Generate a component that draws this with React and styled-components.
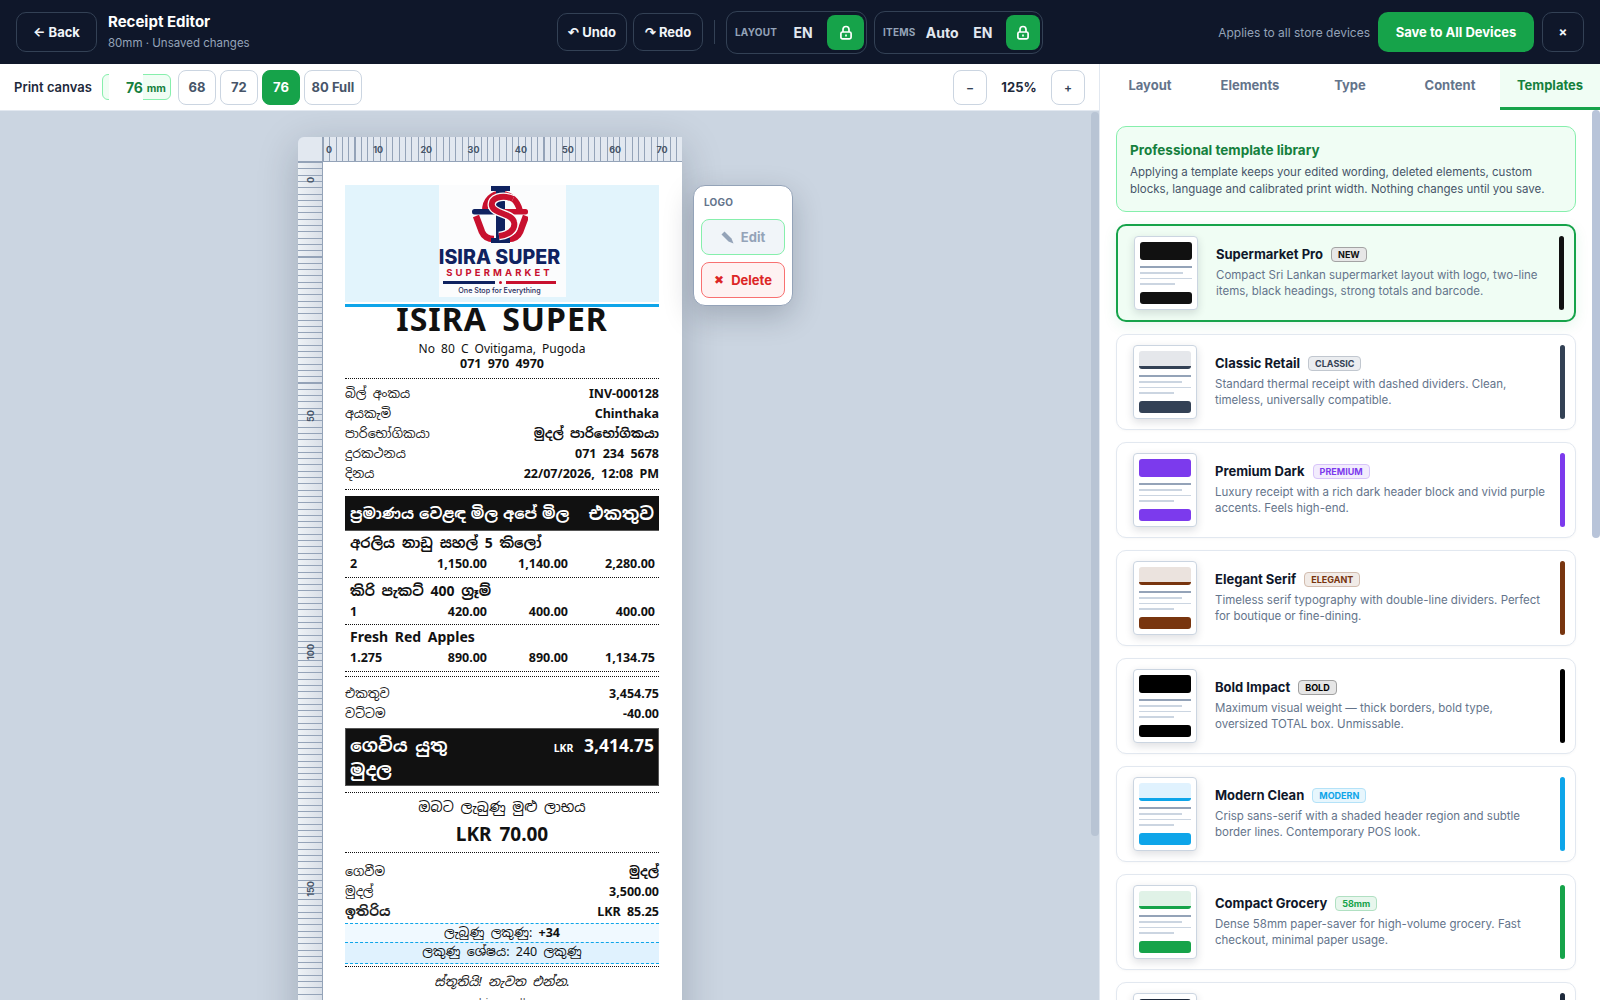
import React from "react";
import styled, { createGlobalStyle } from "styled-components";

const Global = createGlobalStyle`
  html, body { margin: 0; padding: 0; height: 100%; overflow: hidden; }
  body { font-family: Inter, "Noto Sans", sans-serif; background: #fff; }
  * { box-sizing: border-box; }
  #root { height: 100%; }
`;

const Page = styled.div`
  width: 1600px;
  height: 1000px;
  display: flex;
  flex-direction: column;
  overflow: hidden;
`;

/* header */
const Header = styled.header`
  height: 64px;
  flex: none;
  background: #0f172a;
  display: flex;
  align-items: center;
  padding: 0 16px;
`;
const HeadLeft = styled.div`
  display: flex;
  align-items: center;
  gap: 11px;
  width: 541px;
`;
const HeadCenter = styled.div`
  display: flex;
  align-items: center;
  gap: 6px;
`;
const HeadRight = styled.div`
  margin-left: auto;
  display: flex;
  align-items: center;
  gap: 8px;
`;
const DarkButton = styled.button`
  height: ${(p) => p.$h || 38}px;
  width: ${(p) => p.$w}px;
  padding: 0;
  background: transparent;
  border: 1px solid #334155;
  border-radius: 10px;
  color: #f1f5f9;
  font: 700 13px Inter, sans-serif;
  display: flex;
  align-items: center;
  justify-content: center;
  gap: 3px;
`;
const TitleBlock = styled.div`
  display: flex;
  flex-direction: column;
  gap: 5px;
`;
const AppTitle = styled.div`
  color: #fff;
  font-size: 15px;
  font-weight: 700;
  line-height: 18px;
`;
const AppSub = styled.div`
  color: #94a3b8;
  font-size: 11.5px;
  line-height: 15px;
`;
const VDivider = styled.div`
  width: 1px;
  height: 24px;
  background: #334155;
  margin: 0 5px;
`;
const LangGroup = styled.div`
  height: 43px;
  width: ${(p) => p.$w}px;
  border: 1px solid #334155;
  border-radius: 11px;
  display: flex;
  align-items: center;
  padding: 0 2px 0 8px;
  margin-right: 1px;
`;
const GroupLabel = styled.span`
  color: #94a3b8;
  font-size: 10px;
  font-weight: 700;
  letter-spacing: 0.2px;
  width: ${(p) => p.$w}px;
`;
const GroupValue = styled.span`
  color: #e2e8f0;
  font-size: 14px;
  font-weight: 700;
  width: ${(p) => p.$w}px;
  text-align: center;
`;
const LockBox = styled.div`
  margin-left: auto;
  width: 37px;
  height: 35px;
  border-radius: 8px;
  background: #16a34a;
  color: #fff;
  display: flex;
  align-items: center;
  justify-content: center;
`;
const Hint = styled.span`
  color: #94a3b8;
  font-size: 12px;
`;
const SaveButton = styled.button`
  height: 40px;
  width: 156px;
  border: 0;
  border-radius: 10px;
  background: #16a34a;
  color: #fff;
  font: 700 13px Inter, sans-serif;
`;

/* body */
const Body = styled.div`
  flex: 1;
  display: flex;
  min-height: 0;
`;
const Left = styled.div`
  width: 1100px;
  display: flex;
  flex-direction: column;
  border-right: 1px solid #e2e8f0;
`;
const Toolbar = styled.div`
  height: 47px;
  flex: none;
  background: #fff;
  border-bottom: 1px solid #e2e8f0;
  display: flex;
  align-items: center;
  padding: 0 14px;
`;
const CanvasLabel = styled.span`
  font-size: 13px;
  font-weight: 600;
  color: #1e293b;
  margin-right: 10px;
`;
const WidthField = styled.div`
  position: relative;
  width: 69px;
  height: 26px;
  border: 1px solid #86efac;
  border-radius: 6px;
  background: #f0fdf4;
  display: flex;
  align-items: center;
  justify-content: flex-end;
  padding: 2px 4px 0 0;
  margin-right: 7px;
  color: #15803d;
  font-size: 10.5px;
  font-weight: 700;
`;
const WidthInput = styled.div`
  position: absolute;
  left: 6px;
  top: -1px;
  width: 34px;
  height: 33px;
  background: #fff;
  border-radius: 0 0 6px 6px;
  color: #15803d;
  font-size: 14px;
  font-weight: 700;
  text-align: right;
  line-height: 28px;
`;
const Preset = styled.button`
  width: ${(p) => p.$w || 38}px;
  height: 35px;
  margin-right: 4px;
  padding: 0;
  border-radius: 8px;
  border: 1px solid ${(p) => (p.$on ? "#16a34a" : "#cbd5e1")};
  background: ${(p) => (p.$on ? "#16a34a" : "#fff")};
  color: ${(p) => (p.$on ? "#fff" : "#475569")};
  font: 700 13px Inter, sans-serif;
`;
const ZoomGroup = styled.div`
  margin-left: auto;
  display: flex;
  align-items: center;
`;
const ZoomButton = styled.button`
  width: 34px;
  height: 35px;
  padding: 0;
  background: #fff;
  border: 1px solid #cbd5e1;
  border-radius: 8px;
  color: #334155;
  font: 600 12px Inter, sans-serif;
`;
const ZoomValue = styled.span`
  width: 64px;
  text-align: center;
  font-size: 13px;
  font-weight: 700;
  color: #1e293b;
`;
const Canvas = styled.div`
  flex: 1;
  min-height: 0;
  position: relative;
  background: #cbd5e1;
  overflow: hidden;
  padding: 26px 0 0 298px;
`;
const ScrollThumb = styled.div`
  position: absolute;
  right: 0;
  top: ${(p) => p.$top}px;
  width: 8px;
  height: ${(p) => p.$h}px;
  border-radius: 4px;
  background: ${(p) => p.$c};
  z-index: 6;
`;
const Rulers = styled.div`
  width: 384px;
  position: relative;
  box-shadow: 0 10px 40px rgba(15, 23, 42, 0.22);
  border-radius: 6px 6px 0 0;
`;
const RulerTop = styled.div`
  display: flex;
  height: 25px;
`;
const RulerCorner = styled.div`
  width: 25px;
  flex: none;
  background: #e2e8f0;
  border-bottom: 1px solid #94a3b8;
  border-right: 1px solid #94a3b8;
  border-radius: 6px 0 0 0;
`;
const RulerH = styled.div`
  flex: 1;
  position: relative;
  background: repeating-linear-gradient(90deg, #94a3b8 0 1px, transparent 1px 6.3px),
    #e2e8f0;
  border-bottom: 1px solid #94a3b8;
  overflow: hidden;
`;
const HTick = styled.span`
  position: absolute;
  top: 7px;
  font: 700 9px/11px Inter, sans-serif;
  color: #475569;
  padding: 0 1px;
`;
const RulerRow = styled.div`
  display: flex;
`;
const RulerV = styled.div`
  width: 25px;
  flex: none;
  position: relative;
  background: repeating-linear-gradient(180deg, #94a3b8 0 1px, transparent 1px 6.3px),
    linear-gradient(90deg, #eef2f6, #d9dfe7);
  border-right: 1px solid #94a3b8;
  overflow: hidden;
`;
const VTick = styled.span`
  position: absolute;
  left: 7px;
  font: 700 9px/11px Inter, sans-serif;
  color: #475569;
  writing-mode: vertical-rl;
  transform: translateY(-50%) rotate(180deg);
`;

/* receipt */
const Paper = styled.div`
  flex: 1;
  min-width: 0;
  background: #fff;
  padding: 23px 23px 0 22px;
  height: 1050px;
  color: #111;
  font-family: "Noto Sans", "Noto Sans Sinhala", "Iskoola Pota", "Nirmala UI", sans-serif;
  word-spacing: 3px;
`;
const LogoWrap = styled.div`
  height: 117px;
  background: #e2f4fc;
  display: flex;
  justify-content: center;
  align-items: flex-start;
`;
const LogoImage = styled.div`
  width: 127px;
  height: 112px;
  background: #fbfcfd;
  display: flex;
  flex-direction: column;
  align-items: center;
  overflow: hidden;
  padding-right: 5px;
`;
const LogoName = styled.div`
  font: 800 19.6px/20px Inter, "Liberation Sans", sans-serif;
  color: #0f2260;
  white-space: nowrap;
  margin-top: 3px;
  word-spacing: 0;
`;
const LogoMarket = styled.div`
  font: 700 9.5px/11px Inter, sans-serif;
  color: #c8102e;
  letter-spacing: 3.1px;
  white-space: nowrap;
  word-spacing: 0;
`;
const LogoRule = styled.div`
  display: flex;
  align-items: center;
  gap: 4px;
  margin-top: 2px;
  height: 4px;
`;
const LogoBar = styled.span`
  height: 3px;
  width: ${(p) => p.$w}px;
  background: ${(p) => p.$c};
`;
const LogoDot = styled.span`
  width: 3px;
  height: 3px;
  border-radius: 50%;
  background: #c8102e;
`;
const LogoTag = styled.div`
  font: 500 7.2px/10px Inter, sans-serif;
  color: #1e2a5a;
  white-space: nowrap;
  margin-top: 2px;
  word-spacing: 0;
`;
const BlueRule = styled.div`
  height: 3px;
  background: #0ea5e9;
  margin-top: 2px;
`;
const StoreName = styled.div`
  text-align: center;
  font-size: 32px;
  font-weight: 700;
  line-height: 24px;
  letter-spacing: 1px;
  word-spacing: 6px;
`;
const Address = styled.div`
  text-align: center;
  font-size: 12px;
  line-height: 15px;
  margin-top: 10px;
`;
const Phone = styled.div`
  text-align: center;
  font-size: 12.5px;
  font-weight: 700;
  line-height: 15px;
`;
const Dots = styled.div`
  border-top: 1.5px dotted #111;
  margin: ${(p) => p.$m || "7px 0"};
`;
const InfoRow = styled.div`
  display: flex;
  justify-content: space-between;
  align-items: center;
  height: 20px;
  font-size: 12.5px;
`;
const InfoLabel = styled.span`
  font-size: ${(p) => p.$s || 12.5}px;
  font-weight: ${(p) => (p.$bold ? 700 : 400)};
  color: #222;
`;
const InfoValue = styled.span`
  font-size: 12.5px;
  font-weight: 700;
`;
const TableHead = styled.div`
  height: 35px;
  background: #111;
  color: #fff;
  font-size: 15.3px;
  font-weight: 700;
  display: flex;
  align-items: center;
  justify-content: space-between;
  padding: 0 5px;
  word-spacing: 1px;
  border-bottom: 1px solid #555;
  white-space: nowrap;
`;
const HeadTotal = styled.span`
  font-size: 17.5px;
`;
const ItemName = styled.div`
  font-size: 14px;
  font-weight: 700;
  line-height: ${(p) => p.$l || 22}px;
  padding: 0 5px;
  margin-top: 1px;
`;
const ItemNums = styled.div`
  display: grid;
  grid-template-columns: 1fr 81px 81px 87px;
  font-size: 12.5px;
  font-weight: 700;
  line-height: 20px;
  padding: 0 4px 0 5px;
  text-align: right;
  word-spacing: 0;
  & > span:first-child { text-align: left; }
`;
const TotalBox = styled.div`
  height: 58px;
  background: #111;
  border: 1px solid #555;
  color: #fff;
  display: flex;
  justify-content: space-between;
  padding: 4px 4px 0;
  margin-top: 5px;
`;
const TotalLabel = styled.div`
  font-size: 17.5px;
  font-weight: 700;
  line-height: 24px;
  width: 120px;
`;
const TotalValue = styled.div`
  font-size: 17.5px;
  font-weight: 700;
  line-height: 25px;
  & > small { font-size: 10.5px; margin-right: 3px; }
`;
const Center = styled.div`
  text-align: center;
  font-size: ${(p) => p.$s || 12.5}px;
  font-weight: ${(p) => p.$w || 400};
  line-height: ${(p) => p.$l || 20}px;
  font-style: ${(p) => (p.$i ? "italic" : "normal")};
  color: ${(p) => p.$c || "#111"};
  margin-top: ${(p) => p.$t || 0}px;
`;
const Loyalty = styled.div`
  text-align: center;
  font-size: 12.5px;
  line-height: 18px;
  height: ${(p) => (p.$dark ? 22 : 19)}px;
  margin-top: ${(p) => (p.$dark ? 0 : 2)}px;
  background: ${(p) => (p.$dark ? "#e0f2fe" : "#f0f9ff")};
  border-top: 1px dashed #0ea5e9;
  border-bottom: ${(p) => (p.$dark ? "1px dashed #0ea5e9" : "0")};
`;

/* popover */
const Popover = styled.div`
  position: absolute;
  left: 395px;
  top: 48px;
  width: 100px;
  height: 121px;
  background: #fff;
  border: 1px solid #94a3b8;
  border-radius: 12px;
  box-shadow: 0 10px 30px rgba(15, 23, 42, 0.22);
  padding: 10px 7px;
  z-index: 5;
`;
const PopLabel = styled.div`
  font: 700 10px/12px Inter, sans-serif;
  color: #64748b;
  padding-left: 3px;
  letter-spacing: 0.2px;
  margin-bottom: 11px;
`;
const PopButton = styled.button`
  width: 84px;
  height: 36px;
  padding: 0;
  margin-bottom: 7px;
  border-radius: 8px;
  border: 1px solid ${(p) => (p.$danger ? "#f87171" : "#86efac")};
  background: ${(p) => (p.$danger ? "#fef2f2" : "#f1f5f9")};
  color: ${(p) => (p.$danger ? "#dc2626" : "#94a3b8")};
  font: 700 13px Inter, sans-serif;
  display: flex;
  align-items: center;
  justify-content: center;
  gap: 7px;
`;
const PopIcon = styled.span`
  font: 400 ${(p) => p.$s}px/1 "DejaVu Sans", sans-serif;
`;

/* right panel */
const Panel = styled.aside`
  flex: 1;
  display: flex;
  flex-direction: column;
  min-width: 0;
  background: #fff;
`;
const Tabs = styled.div`
  height: 46px;
  flex: none;
  display: grid;
  grid-template-columns: repeat(5, 1fr);
  border-bottom: 1px solid #e2e8f0;
`;
const Tab = styled.div`
  display: flex;
  align-items: center;
  justify-content: center;
  font-size: 13px;
  font-weight: 700;
  color: ${(p) => (p.$on ? "#15803d" : "#64748b")};
  background: ${(p) => (p.$on ? "#f0fdf4" : "#fff")};
  border-bottom: ${(p) => (p.$on ? "3px solid #16a34a" : "0")};
  margin-bottom: -1px;
  padding-bottom: ${(p) => (p.$on ? "1px" : "4px")};
`;
const PanelScroll = styled.div`
  flex: 1;
  min-height: 0;
  position: relative;
  overflow: hidden;
`;
const PanelInner = styled.div`
  padding: 16px 24px 0 16px;
  display: flex;
  flex-direction: column;
  gap: 12px;
`;
const Banner = styled.div`
  height: 86px;
  flex: none;
  border: 1px solid #86efac;
  border-radius: 10px;
  background: #f0fdf4;
  padding: 14px 13px;
`;
const BannerTitle = styled.div`
  font-size: 13.5px;
  font-weight: 700;
  color: #15803d;
  line-height: 18px;
  margin-bottom: 5px;
`;
const BannerText = styled.div`
  font-size: 11.5px;
  line-height: 17px;
  color: #475569;
`;
const Card = styled.div`
  flex: none;
  display: flex;
  align-items: stretch;
  border: ${(p) => (p.$on ? "2px solid #16a34a" : "1px solid #e2e8f0")};
  border-radius: 10px;
  background: ${(p) => (p.$on ? "#f0fdf4" : "#fff")};
  padding: 10px 10px 10px 16px;
  box-shadow: ${(p) => (p.$on ? "0 4px 14px rgba(22, 163, 74, 0.1)" : "0 1px 3px rgba(15, 23, 42, 0.03)")};
`;
const Thumb = styled.div`
  width: 64px;
  height: 74px;
  flex: none;
  background: #fff;
  border: 1px solid #cbd5e1;
  border-radius: 4px;
  padding: 5px;
  box-shadow: 0 3px 8px rgba(15, 23, 42, 0.14);
  display: flex;
  flex-direction: column;
  margin-right: 18px;
`;
const ThumbHead = styled.div`
  height: 18px;
  flex: none;
  border-radius: 3px;
  background: ${(p) => (p.$tint ? p.$tint : p.$c)};
  border-bottom: ${(p) => (p.$tint ? `3px solid ${p.$c}` : "0")};
`;
const ThumbLine = styled.div`
  height: 2px;
  width: ${(p) => p.$w}px;
  background: ${(p) => (p.$dark ? "#94a3b8" : "#cbd5e1")};
  margin-top: ${(p) => p.$t}px;
`;
const ThumbFoot = styled.div`
  height: 12px;
  flex: none;
  border-radius: 3px;
  background: ${(p) => p.$c};
  margin-top: 7px;
`;
const CardBody = styled.div`
  flex: 1;
  min-width: 0;
  display: flex;
  flex-direction: column;
  justify-content: center;
  padding: 0 14px 2px 0;
`;
const CardHead = styled.div`
  display: flex;
  align-items: center;
  gap: 8px;
  margin-bottom: 4px;
`;
const CardTitle = styled.span`
  font-size: 13px;
  font-weight: 700;
  line-height: 18px;
  color: #0f172a;
`;
const Badge = styled.span`
  font-size: 9px;
  font-weight: 700;
  line-height: 13px;
  padding: 0 6px;
  border-radius: 4px;
  color: ${(p) => p.$c};
  background: ${(p) => p.$bg};
  border: 1px solid ${(p) => p.$b};
`;
const CardDesc = styled.div`
  font-size: 11.5px;
  line-height: 16px;
  color: #64748b;
`;
const Accent = styled.div`
  width: 5px;
  flex: none;
  border-radius: 3px;
  background: ${(p) => p.$c};
`;

const templates = [
  { name: "Supermarket Pro", badge: "NEW", c: "#111111", bc: "#111111", bg: "#e7e7e7", bb: "#a3a3a3", desc: "Compact Sri Lankan supermarket layout with logo, two-line items, black headings, strong totals and barcode.", on: true },
  { name: "Classic Retail", badge: "CLASSIC", c: "#334155", bc: "#334155", bg: "#ebedf0", bb: "#c1c7cf", tint: "#e5e7eb", desc: "Standard thermal receipt with dashed dividers. Clean, timeless, universally compatible." },
  { name: "Premium Dark", badge: "PREMIUM", c: "#7c3aed", bc: "#7c3aed", bg: "#f2ecfd", bb: "#d8c4fa", desc: "Luxury receipt with a rich dark header block and vivid purple accents. Feels high-end." },
  { name: "Elegant Serif", badge: "ELEGANT", c: "#78350f", bc: "#78350f", bg: "#f1ebe7", bb: "#d2bcae", tint: "#ebe3de", desc: "Timeless serif typography with double-line dividers. Perfect for boutique or fine-dining." },
  { name: "Bold Impact", badge: "BOLD", c: "#000000", bc: "#000000", bg: "#e6e6e6", bb: "#a0a0a0", desc: "Maximum visual weight — thick borders, bold type, oversized TOTAL box. Unmissable." },
  { name: "Modern Clean", badge: "MODERN", c: "#0ea5e9", bc: "#0ea5e9", bg: "#e7f6fd", bb: "#b4e2f8", tint: "#e0f2fe", desc: "Crisp sans-serif with a shaded header region and subtle border lines. Contemporary POS look." },
  { name: "Compact Grocery", badge: "58mm", c: "#16a34a", bc: "#16a34a", bg: "#e8f6ed", bb: "#b0e0c2", tint: "#e0f2e7", desc: "Dense 58mm paper-saver for high-volume grocery. Fast checkout, minimal paper usage." },
  { name: "Night Market", badge: "DARK", c: "#1e293b", bc: "#1e293b", bg: "#e9eaec", bb: "#b5b9c0", desc: "High-contrast layout for busy counters." },
];

const LogoMark = () => (
  <svg width="56" height="58" viewBox="0 0 56 58" fill="none" style={{ flex: "none", marginTop: 1 }}>
    <path d="M13 25 C13 2 43 2 48 25" stroke="#c8102e" strokeWidth="6" />
    <path d="M4 30 L10 46 Q13 53 22 53" stroke="#c8102e" strokeWidth="6.5" />
    <path d="M54 30 L48 46 Q45 53 36 53" stroke="#c8102e" strokeWidth="6.5" />
    <rect x="24" y="3" width="9" height="52" fill="#0f2260" />
    <rect x="19" y="0" width="19" height="5" fill="#0f2260" />
    <rect x="19" y="52" width="19" height="5" fill="#0f2260" />
    <rect x="0" y="23" width="26" height="5.5" rx="2.5" fill="#0f2260" />
    <rect x="30" y="23" width="26" height="5.5" rx="2.5" fill="#c8102e" />
    <path d="M41 13 C30 8 18 12 20 20 C22 28 40 27 42 36 C44 44 36 49 27 50" stroke="#fbfcfd" strokeWidth="8.5" />
    <path d="M41 13 C30 8 18 12 20 20 C22 28 40 27 42 36 C44 44 36 49 27 50" stroke="#c8102e" strokeWidth="6" />
  </svg>
);

const PenIcon = () => (
  <svg width="13" height="13" viewBox="0 0 13 13" fill="currentColor">
    <path d="M0.5 3.5 L3.5 0.5 L10.5 7.5 L12.5 12.5 L7.5 10.5 Z" />
  </svg>
);

const LockIcon = () => (
  <svg width="14" height="15" viewBox="0 0 14 15" fill="none" stroke="currentColor" strokeWidth="1.7">
    <path d="M4 7 V4.5 a3 3 0 0 1 6 0 V7" />
    <rect x="1.9" y="7" width="10.2" height="6.8" rx="1.6" />
    <path d="M7 9.4 V11.4" />
  </svg>
);

const hTicks = [0, 10, 20, 30, 40, 50, 60, 70];
const vTicks = [0, 50, 100, 150, 200];

const App = () => (
  <Page>
    <Global />
    <Header>
      <HeadLeft>
        <DarkButton $w={81} $h={40}>← Back</DarkButton>
        <TitleBlock>
          <AppTitle>Receipt Editor</AppTitle>
          <AppSub>80mm · Unsaved changes</AppSub>
        </TitleBlock>
      </HeadLeft>
      <HeadCenter>
        <DarkButton $w={70}>↶ Undo</DarkButton>
        <DarkButton $w={70}>↷ Redo</DarkButton>
        <VDivider />
        <LangGroup $w={141}>
          <GroupLabel $w={48}>LAYOUT</GroupLabel>
          <GroupValue $w={40}>EN</GroupValue>
          <LockBox><LockIcon /></LockBox>
        </LangGroup>
        <LangGroup $w={169}>
          <GroupLabel $w={45}>ITEMS</GroupLabel>
          <GroupValue $w={38}>Auto</GroupValue>
          <GroupValue $w={50}>EN</GroupValue>
          <LockBox><LockIcon /></LockBox>
        </LangGroup>
      </HeadCenter>
      <HeadRight>
        <Hint>Applies to all store devices</Hint>
        <SaveButton>Save to All Devices</SaveButton>
        <DarkButton $w={42} $h={40}>×</DarkButton>
      </HeadRight>
    </Header>
    <Body>
      <Left>
        <Toolbar>
          <CanvasLabel>Print canvas</CanvasLabel>
          <WidthField>
            <WidthInput>76</WidthInput>
            mm
          </WidthField>
          <Preset>68</Preset>
          <Preset>72</Preset>
          <Preset $on>76</Preset>
          <Preset $w={58}>80 Full</Preset>
          <ZoomGroup>
            <ZoomButton>−</ZoomButton>
            <ZoomValue>125%</ZoomValue>
            <ZoomButton>+</ZoomButton>
          </ZoomGroup>
        </Toolbar>
        <Canvas>
          <ScrollThumb $top={1} $h={724} $c="#b8c4d4" />
          <Rulers>
            <RulerTop>
              <RulerCorner />
              <RulerH>
                {hTicks.map((t, i) => (
                  <HTick key={t} style={{ left: 2 + i * 47.2 }}>{t}</HTick>
                ))}
              </RulerH>
            </RulerTop>
            <RulerRow>
              <RulerV>
                {vTicks.map((t, i) => (
                  <VTick key={t} style={{ top: 17.6 + i * 236.4 }}>{t}</VTick>
                ))}
              </RulerV>
              <Paper>
                <LogoWrap>
                  <LogoImage>
                    <LogoMark />
                    <LogoName>ISIRA SUPER</LogoName>
                    <LogoMarket>SUPERMARKET</LogoMarket>
                    <LogoRule>
                      <LogoBar $w={52} $c="#0f2260" />
                      <LogoDot />
                      <LogoBar $w={50} $c="#c8102e" />
                    </LogoRule>
                    <LogoTag>One Stop for Everything</LogoTag>
                  </LogoImage>
                </LogoWrap>
                <BlueRule />
                <StoreName>ISIRA SUPER</StoreName>
                <Address>No 80 C Ovitigama, Pugoda</Address>
                <Phone>071 970 4970</Phone>
                <Dots $m="7px 0 4px" />
                <InfoRow><InfoLabel>බිල් අංකය</InfoLabel><InfoValue>INV-000128</InfoValue></InfoRow>
                <InfoRow><InfoLabel>අයකැමි</InfoLabel><InfoValue>Chinthaka</InfoValue></InfoRow>
                <InfoRow><InfoLabel>පාරිභෝගිකයා</InfoLabel><InfoValue>මුදල් පාරිභෝගිකයා</InfoValue></InfoRow>
                <InfoRow><InfoLabel>දුරකථනය</InfoLabel><InfoValue>071 234 5678</InfoValue></InfoRow>
                <InfoRow><InfoLabel>දිනය</InfoLabel><InfoValue>22/07/2026, 12:08 PM</InfoValue></InfoRow>
                <Dots $m="6px 0" />
                <TableHead><span>ප්‍රමාණය වෙළඳ මිල අපේ මිල</span><HeadTotal>එකතුව</HeadTotal></TableHead>
                <ItemName>අරලිය නාඩු සහල් 5 කිලෝ</ItemName>
                <ItemNums><span>2</span><span>1,150.00</span><span>1,140.00</span><span>2,280.00</span></ItemNums>
                <Dots $m="3px 0 1px" />
                <ItemName $l={23}>කිරි පැකට් 400 ග්‍රෑම්</ItemName>
                <ItemNums><span>1</span><span>420.00</span><span>400.00</span><span>400.00</span></ItemNums>
                <Dots $m="2px 0 1px" />
                <ItemName>Fresh Red Apples</ItemName>
                <ItemNums><span>1.275</span><span>890.00</span><span>890.00</span><span>1,134.75</span></ItemNums>
                <Dots $m="3px 0 4px" />
                <Dots $m="0 0 6px" />
                <InfoRow><InfoLabel>එකතුව</InfoLabel><InfoValue>3,454.75</InfoValue></InfoRow>
                <InfoRow><InfoLabel>වට්ටම</InfoLabel><InfoValue>-40.00</InfoValue></InfoRow>
                <TotalBox>
                  <TotalLabel>ගෙවිය යුතු මුදල</TotalLabel>
                  <TotalValue><small>LKR</small> 3,414.75</TotalValue>
                </TotalBox>
                <Dots $m="6px 0 4px" />
                <Center $s={14}>ඔබට ලැබුණු මුළු ලාභය</Center>
                <Center $s={19} $w={700} $l={28} $t={3}>LKR 70.00</Center>
                <Dots $m="4px 0 8px" />
                <InfoRow><InfoLabel>ගෙවීම</InfoLabel><InfoValue>මුදල්</InfoValue></InfoRow>
                <InfoRow><InfoLabel>මුදල්</InfoLabel><InfoValue>3,500.00</InfoValue></InfoRow>
                <InfoRow><InfoLabel $bold $s={13.5}>ඉතිරිය</InfoLabel><InfoValue>LKR 85.25</InfoValue></InfoRow>
                <Loyalty>ලැබුණු ලකුණු: <b>+34</b></Loyalty>
                <Loyalty $dark>ලකුණු ශේෂය: 240 ලකුණු</Loyalty>
                <Dots $m="2px 0 5px" />
                <Center $i>ස්තූතියි! නැවත එන්න.</Center>
                <Center $c="#555" $s={11}>www.bizgopalk.com</Center>
              </Paper>
            </RulerRow>
            <Popover>
              <PopLabel>LOGO</PopLabel>
              <PopButton><PenIcon />Edit</PopButton>
              <PopButton $danger><PopIcon $s={12}>✖</PopIcon>Delete</PopButton>
            </Popover>
          </Rulers>
        </Canvas>
      </Left>
      <Panel>
        <Tabs>
          <Tab>Layout</Tab>
          <Tab>Elements</Tab>
          <Tab>Type</Tab>
          <Tab>Content</Tab>
          <Tab $on>Templates</Tab>
        </Tabs>
        <PanelScroll>
          <ScrollThumb $top={0} $h={428} $c="#b8c4d9" />
          <PanelInner>
            <Banner>
              <BannerTitle>Professional template library</BannerTitle>
              <BannerText>
                Applying a template keeps your edited wording, deleted elements, custom blocks, language and calibrated print width. Nothing changes until you save.
              </BannerText>
            </Banner>
            {templates.map((t) => (
              <Card key={t.name} $on={t.on}>
                <Thumb>
                  <ThumbHead $c={t.c} $tint={t.tint} />
                  <ThumbLine $dark $w={52} $t={6} />
                  <ThumbLine $w={43} $t={4} />
                  <ThumbLine $w={52} $t={4} />
                  <ThumbLine $w={35} $t={4} />
                  <ThumbFoot $c={t.c} />
                </Thumb>
                <CardBody>
                  <CardHead>
                    <CardTitle>{t.name}</CardTitle>
                    <Badge $c={t.bc} $bg={t.bg} $b={t.bb}>{t.badge}</Badge>
                  </CardHead>
                  <CardDesc>{t.desc}</CardDesc>
                </CardBody>
                <Accent $c={t.c} />
              </Card>
            ))}
          </PanelInner>
        </PanelScroll>
      </Panel>
    </Body>
  </Page>
);

export default App;
